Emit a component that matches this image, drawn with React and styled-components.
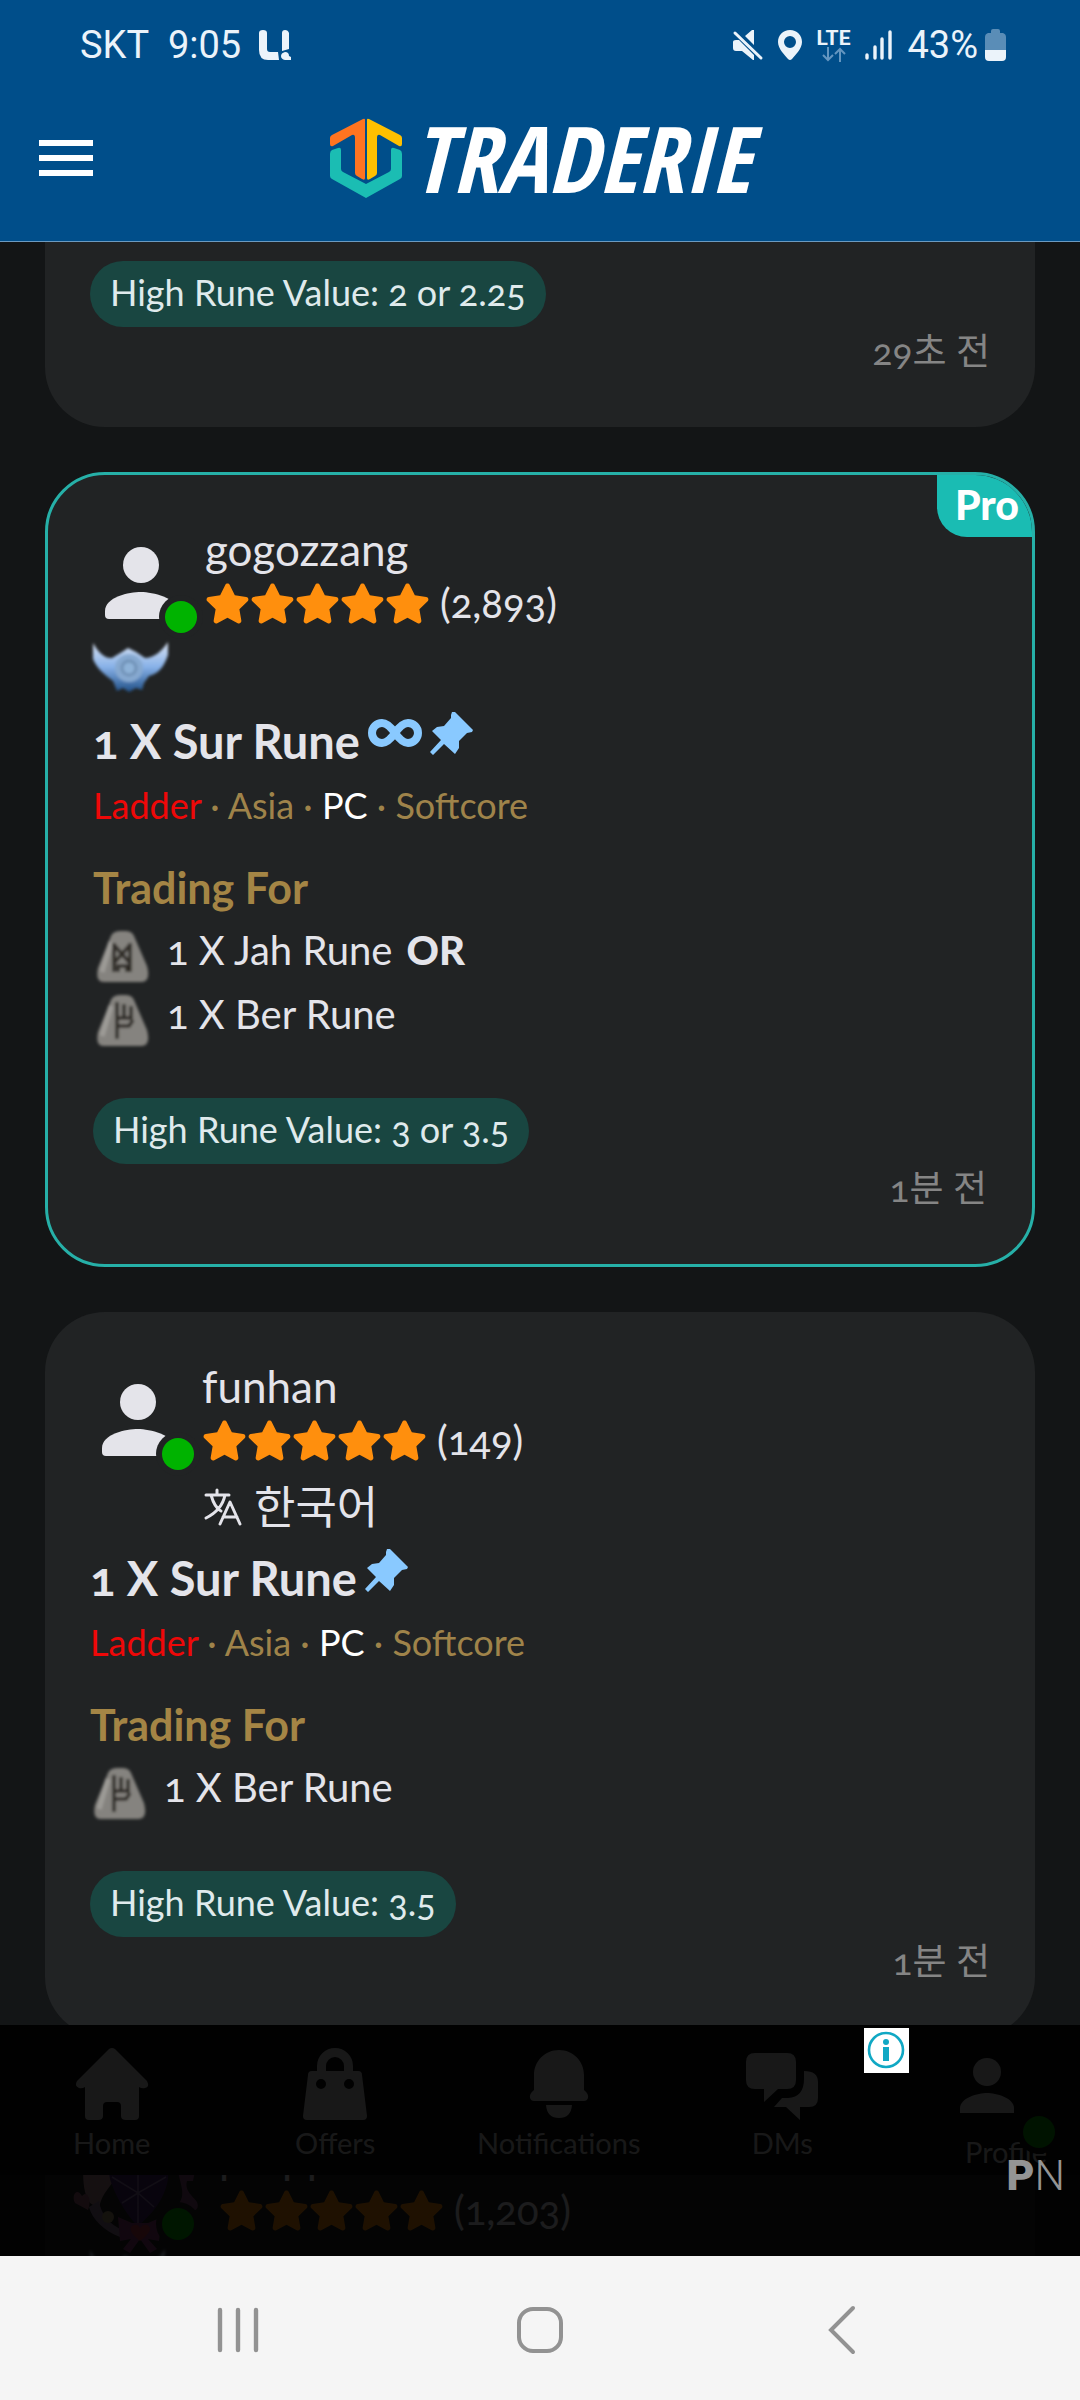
import styled, { createGlobalStyle, css } from "styled-components";
import { FaStar } from "react-icons/fa";

const GlobalStyle = createGlobalStyle`
    * {
        box-sizing: border-box;
    }

    body {
        margin: 0;
        background-color: #131516;
        color: #e4e4ea;
        font-family: "Lato", "Noto Sans CJK KR", sans-serif;
        font-size: 40px;
        font-variant-numeric: oldstyle-nums;
    }

    h2, h3, p, ul {
        margin: 0;
        padding: 0;
    }

    button {
        border: none;
        padding: 0;
        background: none;
        cursor: pointer;
    }

    svg {
        display: block;
        flex-shrink: 0;
        overflow: visible;
    }
`;

const Screen = styled.div`
    display: flex;
    flex-direction: column;
    height: 100vh;
    overflow: hidden;
`;

const TopArea = styled.header`
    background-color: #004e8a;
    border-bottom: 1px solid #6c9abf;
`;

const StatusBar = styled.div`
    display: flex;
    justify-content: space-between;
    padding: 15px 74px 0 80px;
    height: 75px;
    color: #ebf3fa;
    font-family: "Roboto", sans-serif;
    font-size: 38px;
    font-variant-numeric: lining-nums;
    line-height: 62px;
`;

const StatusGroup = styled.div`
    display: flex;
    align-items: center;
    gap: ${(props) => props.$gap}px;
`;

const Network = styled.div`
    display: flex;
    flex-direction: column;
    align-items: center;
    font-size: 21px;
    font-weight: 700;
    line-height: 18px;
`;

const Toolbar = styled.div`
    display: grid;
    grid-template-columns: 1fr auto 1fr;
    align-items: center;
    height: 166px;
    padding: 0 39px;
`;

const MenuButton = styled.button`
    display: flex;
    flex-direction: column;
    gap: 9px;
    width: 54px;

    span {
        height: 6px;
        background-color: #ffffff;
    }
`;

const Brand = styled.a`
    display: flex;
    align-items: center;
    gap: 10px;
    color: #ffffff;
    font-family: "Open Sans Condensed", "Roboto Condensed", "Liberation Sans Narrow", sans-serif;
    font-size: 92px;
    font-style: italic;
    font-weight: 700;
    line-height: 80px;
    text-decoration: none;
`;

const Feed = styled.main`
    position: relative;
    flex: 1;
    min-height: 0;
    overflow: hidden;
    display: flex;
    flex-direction: column;
    gap: 45px;
    padding: 0 45px;
`;

const Card = styled.article`
    position: relative;
    flex-shrink: 0;
    padding: 45px 45px 50px;
    background-color: #212324;
    border-radius: 60px;
    overflow: hidden;

    ${(props) =>
        props.$pro &&
        css`
            border: 3px solid #26b0a8;
        `}

    ${(props) =>
        props.$scrolled &&
        css`
            padding-top: 19px;
            border-top-left-radius: 0;
            border-top-right-radius: 0;
        `}
`;

const ProTag = styled.span`
    position: absolute;
    top: 0;
    right: 0;
    padding: 0 13px 3px 18px;
    background-color: #1abcb3;
    border-bottom-left-radius: 30px;
    color: #ffffff;
    font-size: 41px;
    font-weight: 900;
    line-height: 59px;
`;

const UserRow = styled.div`
    display: flex;
    gap: ${(props) => (props.$framed ? 20 : 4)}px;
    margin-left: ${(props) => (props.$framed ? -16 : 0)}px;
    height: 108px;
`;

const UserName = styled.a`
    display: block;
    color: inherit;
    font-size: 44px;
    line-height: 58px;
    text-decoration: none;
`;

const Rating = styled.div`
    display: flex;
    align-items: center;
    line-height: 50px;
`;

const Stars = styled.span`
    display: flex;
    color: #ff8f0d;
    margin-right: 10px;
`;

const ExtraRow = styled.div`
    display: flex;
    align-items: center;
    gap: 12px;
    height: 83px;
    padding-left: ${(props) => (props.$indent ? 114 : 0)}px;
    font-size: 45px;
    line-height: 60px;
`;

const Title = styled.h2`
    display: flex;
    gap: 8px;
    font-size: 47px;
    font-weight: 700;
    line-height: 60px;
`;

const InfinityBox = styled.span`
    padding-top: 8px;
`;

const Tags = styled.p`
    margin-top: 9px;
    color: #9f834a;
    font-size: 36px;
    line-height: 50px;
`;

const Ladder = styled.span`
    color: #ee0808;
`;

const Platform = styled.span`
    color: #ffffff;
`;

const TradingFor = styled.h3`
    margin-top: 32px;
    color: #a48545;
    font-size: 43px;
    line-height: 52px;
`;

const TradeList = styled.ul`
    margin: 4px 0 52px;
    list-style: none;
`;

const TradeItem = styled.li`
    display: flex;
    gap: 14px;
    line-height: 64px;

    b {
        font-weight: 900;
    }
`;

const Value = styled.span`
    display: table;
    padding: 0 20px 4px;
    background-color: #194641;
    border-radius: 34px;
    color: #dfeaec;
    font-size: 36px;
    line-height: 62px;
`;

const Time = styled.time`
    display: block;
    color: #858585;
    font-size: 37px;
    line-height: 48px;
    padding-bottom: 2px;
    text-align: right;
`;

const TabBar = styled.nav`
    position: absolute;
    right: 0;
    bottom: 81px;
    left: 0;
    display: flex;
    height: 150px;
    background-color: #0a0a0b;
`;

const Tab = styled.a`
    flex: 1;
    display: flex;
    flex-direction: column;
    align-items: center;
    padding-top: 23px;
    color: #c2c4c4;
    font-size: 29px;
    line-height: 46px;
    text-decoration: none;

    svg {
        position: relative;
        z-index: 1;
    }

    &:last-child {
        flex: 0 0 186px;
        padding-left: 38px;
    }
`;

const AdOverlay = styled.aside`
    position: absolute;
    right: 0;
    bottom: 0;
    left: 0;
    z-index: 2;
    height: 231px;
    background-color: rgba(0, 0, 0, 0.88);
`;

const AdInfo = styled.button`
    position: absolute;
    top: 3px;
    right: 171px;
    background-color: #ffffff;
`;

const AdLabel = styled.span`
    position: absolute;
    right: 15px;
    bottom: 57px;
    color: #949494;
    font-family: "Roboto", sans-serif;
    font-size: 43px;
    font-weight: 300;
    line-height: 48px;

    b {
        font-weight: 900;
    }
`;

const SystemNav = styled.nav`
    display: grid;
    grid-template-columns: repeat(3, 1fr);
    height: 144px;
    padding: 4px 87px 0;
    background-color: #f5f5f5;

    button {
        display: flex;
        align-items: center;
        justify-content: center;
    }
`;

const CarrierIcon = () => (
    <svg width="32" height="30" viewBox="0 0 32 30" fill="currentColor">
        <path d="M0 3Q0 0 4 0T8 3V19Q8 22 11 22H19L20 30H9Q0 30 0 20Z" />
        <path d="M23 3Q23 0 26 0T30 3V19L23 21Z" />
        <path d="M26 22Q30 22 30 26L32 27V30H26Q22 29 22 26T26 22Z" />
    </svg>
);

const MuteIcon = () => (
    <svg width="30" height="30" viewBox="0 0 30 30">
        <path d="M3 10H6L21 25V30H20L9 21H3Q0 21 0 18V12Q0 10 3 10ZM12 6L19 0H21V15Z" fill="currentColor" />
        <path d="M2 3L28 28" stroke="currentColor" strokeWidth="3" strokeLinecap="round" />
    </svg>
);

const PinIcon = () => (
    <svg width="24" height="30" viewBox="0 0 24 30" fill="currentColor">
        <path
            fillRule="evenodd"
            d="M12 0C5 0 0 5 0 12C0 19 7 25 10 29Q12 31 14 29C17 25 24 19 24 12C24 5 19 0 12 0ZM12 6A6 6 0 1 1 12 18A6 6 0 1 1 12 6Z"
        />
    </svg>
);

const DataArrows = () => (
    <svg width="24" height="15" viewBox="0 0 24 15" fill="none" stroke="#6496c0" strokeWidth="2">
        <path d="M6 0V13M1 8L6 13L11 8M18 15V2M13 7L18 2L23 7" />
    </svg>
);

const SignalIcon = () => (
    <svg width="27" height="30" viewBox="0 0 27 30" stroke="currentColor" strokeWidth="3.4" strokeLinecap="round">
        <path d="M2 25V28M10 17V28M17 9V28M25 2V28" />
    </svg>
);

const BatteryIcon = () => (
    <svg width="21" height="32" viewBox="0 0 21 32">
        <path d="M6 2Q6 0 8 0H13Q15 0 15 2V4H18Q21 5 21 8V21H0V8Q0 5 3 4H6Z" fill="#5a8db7" />
        <path d="M0 21H21V28Q21 32 17 32H4Q0 32 0 28Z" fill="#ebf3fa" />
    </svg>
);

const half = "M33 1Q35 0 35 2V60Q35 63 32 61L27 58Q25 57 25 55V20Q25 16 22 17L3 28Q0 29 0 26V20Q0 18 2 17Z";

const HexLogo = () => (
    <svg width="72" height="80" viewBox="0 0 72 80">
        <path d={half} fill="#ff7420" />
        <path d={half} fill="#ffc000" transform="matrix(-1 0 0 1 72 0)" />
        <path
            d="M0 36Q0 33 2 32L8 30Q11 29 11 32V51Q11 53 13 54L36 66L59 54Q61 53 61 51V32Q61 29 64 30L70 32Q72 33 72 36V58Q72 60 70 61L36 80L2 61Q0 60 0 58Z"
            fill="#1bbdb3"
        />
    </svg>
);

const Person = () => (
    <svg width="108" height="108" viewBox="0 0 108 108">
        <circle cx="48" cy="45" r="18" fill="#e4e4ea" />
        <path d="M48 72C36 72 12 77 12 91V95Q12 99 16 99H84V90C84 78 60 72 48 72Z" fill="#e4e4ea" />
        <circle cx="88" cy="97" r="22" fill="#212324" />
        <circle cx="88" cy="97" r="16" fill="#00b300" />
    </svg>
);

const FramedAvatar = () => (
    <svg width="125" height="126" viewBox="0 0 125 126">
        <path d="M9 40H46C42 58 28 62 25 82L16 76C10 68 9 56 9 40Z" fill="#a8808f" />
        <path d="M8 69C3 60-3 68 1 76L14 83C18 74 14 62 8 69Z" fill="#9a5875" />
        <path d="M15 80C18 92 30 104 46 110L48 103C36 97 27 88 25 74Z" fill="#8a7095" />
        <circle cx="34" cy="90" r="6" fill="#a0916a" />
        <path d="M34 40H94V52C90 76 74 90 64 99C52 88 40 66 36 52Z" fill="#46206e" />
        <path d="M64 40V98M38 50L64 66L92 50M48 76L64 66L80 80" stroke="#8f75ab" strokeWidth="1.5" fill="none" />
        <path d="M104 44H121L119 54H113C110 64 120 70 123 75Q126 82 119 84L105 76C112 68 106 56 104 44Z" fill="#874a78" />
        <path d="M44 90L58 96H74L88 90L85 114L74 112L83 122L76 126L66 112L56 126L49 122L57 112L46 114Z" fill="#8a3f78" />
        <path d="M66 114C56 106 54 100 60 98Q64 97 66 101Q69 97 73 98C79 101 76 106 66 114Z" fill="#b83a4c" />
        <circle cx="104" cy="97" r="22" fill="#212324" />
        <circle cx="104" cy="97" r="16" fill="#00b300" />
    </svg>
);

const Emblem = () => (
    <svg width="76" height="60" viewBox="0 0 76 60">
        <defs>
            <linearGradient id="wing" x1="0" y1="0" x2="0" y2="1">
                <stop offset="0" stopColor="#dbe4f3" />
                <stop offset="0.5" stopColor="#87b1e8" />
                <stop offset="1" stopColor="#1f4f86" />
            </linearGradient>
            <filter id="soft">
                <feGaussianBlur stdDeviation="1.4" />
            </filter>
        </defs>
        <g filter="url(#soft)">
            <path
                d="M0 3C5 12 12 19 19 18L29 12L35 8L43 12L52 18C61 18 69 11 75 2V15C71 27 65 34 56 36L51 43L49 50L43 48L36 52L30 48L24 51L20 41C12 35 4 29 0 19Z"
                fill="url(#wing)"
            />
            <circle cx="36" cy="28" r="14" fill="#86a9d0" />
            <circle cx="36" cy="28" r="7" fill="#8eb2d8" stroke="#7091b6" strokeWidth="3" />
        </g>
    </svg>
);

const InfinityIcon = () => (
    <svg width="54" height="28" viewBox="0 0 54 28">
        <path
            d="M27 14C22 7 18 4 14 4A10 10 0 0 0 14 24C18 24 22 21 27 14C32 7 36 4 40 4A10 10 0 0 1 40 24C36 24 32 21 27 14Z"
            fill="none"
            stroke="#89c9ff"
            strokeWidth="8"
        />
    </svg>
);

const Pushpin = () => (
    <svg width="43" height="44" viewBox="0 0 43 44">
        <path
            d="M22 1L25 1L43 19L42 21L37 22L29 30V37L25 43L14 33L3 44L0 41L11 29L2 20L7 16L14 15L21 7V4Z"
            fill="#89c9ff"
        />
    </svg>
);

const TranslateIcon = () => (
    <svg
        width="38"
        height="38"
        viewBox="0 0 38 38"
        fill="none"
        stroke="#e4e4ea"
        strokeWidth="3"
        strokeLinecap="round"
        strokeLinejoin="round"
    >
        <path d="M2 7H25M13 2V7M7 7C9 14 13 21 17 23M21 7C19 17 12 25 2 30M16 36L26 14L36 36M19 29H33" />
    </svg>
);

const runeMarks = {
    Jah: "M21 25V54M37 25V54M21 27L37 45M37 27L21 45M25 54V48H34V54",
    Ber: "M24 20V57M24 36H40M31 22V36M38 24V36M24 44H36L40 38",
};

const RuneIcon = ({ rune }) => (
    <svg width="60" height="64" viewBox="0 0 60 64">
        <g filter="url(#soft)">
            <path d="M18 18Q20 13 28 13H32Q39 13 41 18L54 48Q58 63 49 64H11Q2 64 5 50Z" fill="#85837f" />
            <path d="M18 24L9 54" stroke="#9d9b97" strokeWidth="5" />
            <path d={runeMarks[rune]} fill="none" stroke="#2f2c27" strokeWidth="3.6" />
        </g>
    </svg>
);

const tabs = [
    {
        label: "Home",
        width: 72,
        height: 72,
        icon: (
            <path d="M33 1Q36-1 39 1L71 33Q74 39 69 40Q66 41 63 39V68Q63 72 59 72H50Q45 72 45 68V58Q45 54 41 54H31Q27 54 27 58V68Q27 72 22 72H13Q9 72 9 68V39Q6 41 3 40Q-2 38 1 33Z" />
        ),
    },
    {
        label: "Offers",
        width: 64,
        height: 72,
        icon: (
            <path
                fillRule="evenodd"
                d="M14 23V18A18 18 0 0 1 50 18V23H55Q59 23 59 27L64 68Q64 72 60 72H4Q0 72 0 68L5 27Q5 23 9 23ZM23 23H41V18A9 9 0 0 0 23 18ZM18 31A5 5 0 1 0 18 41A5 5 0 1 0 18 31ZM46 31A5 5 0 1 0 46 41A5 5 0 1 0 46 31Z"
            />
        ),
    },
    {
        label: "Notifications",
        width: 60,
        height: 72,
        icon: (
            <path d="M30 2C16 2 5 13 5 27V42Q0 46 1 50Q2 53 5 53H55Q58 53 59 50Q60 46 55 42V27C55 13 44 2 30 2ZM17 57H43Q42 70 30 70T17 57Z" />
        ),
    },
    {
        label: "DMs",
        width: 72,
        height: 72,
        icon: (
            <path d="M9 5H41Q50 5 50 14V32Q50 41 41 41H32L18 54V41H9Q0 41 0 32V14Q0 5 9 5ZM58 23Q72 23 72 34V50Q72 59 63 59H54V72L40 59H28L36 50H42Q58 49 58 31Z" />
        ),
    },
    {
        label: "Profile",
        width: 108,
        height: 81,
        icon: (
            <>
                <circle cx="35" cy="24" r="14" />
                <path d="M35 45C26 45 8 50 8 60V65H62V60C62 50 44 45 35 45Z" />
                <circle cx="87" cy="84" r="22" fill="#0a0a0b" />
                <circle cx="87" cy="84" r="16" fill="#009800" />
            </>
        ),
    },
];

const listings = [
    { id: 1, scrolled: true, value: "2 or 2.25", time: "29초 전" },
    {
        id: 2,
        pro: true,
        user: "gogozzang",
        reviews: "2,893",
        emblem: true,
        infinite: true,
        runes: ["Jah", "Ber"],
        value: "3 or 3.5",
        time: "1분 전",
    },
    { id: 3, user: "funhan", reviews: "149", language: "한국어", runes: ["Ber"], value: "3.5", time: "1분 전" },
    { id: 4, user: "prepp", reviews: "1,203", framed: true, emblem: true },
];

function Seller({ item }) {
    return (
        <>
            <UserRow $framed={item.framed}>
                {item.framed ? <FramedAvatar /> : <Person />}
                <div>
                    <UserName href="#profile">{item.user}</UserName>
                    <Rating>
                        <Stars>
                            {[1, 2, 3, 4, 5].map((n) => (
                                <FaStar key={n} size={45} />
                            ))}
                        </Stars>
                        ({item.reviews})
                    </Rating>
                </div>
            </UserRow>
            <ExtraRow $indent={item.language}>
                {item.emblem && <Emblem />}
                {item.language && (
                    <>
                        <TranslateIcon />
                        {item.language}
                    </>
                )}
            </ExtraRow>
        </>
    );
}

function Offer({ item }) {
    return (
        <>
            <Title>
                1 X Sur Rune
                {item.infinite && (
                    <InfinityBox>
                        <InfinityIcon />
                    </InfinityBox>
                )}
                <Pushpin />
            </Title>
            <Tags>
                <Ladder>Ladder</Ladder> · Asia · <Platform>PC</Platform> · Softcore
            </Tags>
            <TradingFor>Trading For</TradingFor>
            <TradeList>
                {item.runes.map((rune, i) => (
                    <TradeItem key={rune}>
                        <RuneIcon rune={rune} />
                        <span>1 X {rune} Rune</span>
                        {i < item.runes.length - 1 && <b>OR</b>}
                    </TradeItem>
                ))}
            </TradeList>
        </>
    );
}

function App() {
    return (
        <Screen>
            <GlobalStyle />
            <TopArea>
                <StatusBar>
                    <StatusGroup $gap={18}>
                        <span>SKT&nbsp; 9:05</span>
                        <CarrierIcon />
                    </StatusGroup>
                    <StatusGroup $gap={15}>
                        <MuteIcon />
                        <PinIcon />
                        <Network>
                            LTE
                            <DataArrows />
                        </Network>
                        <SignalIcon />
                        <StatusGroup $gap={7}>
                            43%
                            <BatteryIcon />
                        </StatusGroup>
                    </StatusGroup>
                </StatusBar>
                <Toolbar>
                    <MenuButton aria-label="Menu">
                        <span />
                        <span />
                        <span />
                    </MenuButton>
                    <Brand href="#home">
                        <HexLogo />
                        TRADERIE
                    </Brand>
                </Toolbar>
            </TopArea>
            <Feed>
                {listings.map((item) => (
                    <Card key={item.id} $pro={item.pro} $scrolled={item.scrolled}>
                        {item.pro && <ProTag>Pro</ProTag>}
                        {item.user && <Seller item={item} />}
                        {item.runes && <Offer item={item} />}
                        {item.value && <Value>High Rune Value: {item.value}</Value>}
                        {item.time && <Time>{item.time}</Time>}
                    </Card>
                ))}
                <TabBar>
                    {tabs.map((tab) => (
                        <Tab key={tab.label} href={`#${tab.label.toLowerCase()}`}>
                            <svg
                                width={tab.width}
                                height={tab.height}
                                viewBox={`0 0 ${tab.width} ${tab.height}`}
                                fill="currentColor"
                            >
                                {tab.icon}
                            </svg>
                            {tab.label}
                        </Tab>
                    ))}
                </TabBar>
                <AdOverlay>
                    <AdInfo aria-label="Ad info">
                        <svg width="45" height="45" viewBox="0 0 45 45">
                            <circle cx="22" cy="22" r="17" fill="none" stroke="#10a8c4" strokeWidth="2.6" />
                            <circle cx="22" cy="14" r="3" fill="#10a8c4" />
                            <rect x="19" y="19" width="6" height="14" fill="#10a8c4" />
                        </svg>
                    </AdInfo>
                    <AdLabel>
                        <b>P</b>N
                    </AdLabel>
                </AdOverlay>
            </Feed>
            <SystemNav>
                <button aria-label="Recent apps">
                    <svg width="42" height="46" viewBox="0 0 42 46" stroke="#929292" strokeWidth="4.4" strokeLinecap="round">
                        <path d="M3 3V43M21 3V43M39 3V43" />
                    </svg>
                </button>
                <button aria-label="Home">
                    <svg width="46" height="46" viewBox="0 0 46 46">
                        <rect x="2" y="2" width="42" height="42" rx="14" fill="none" stroke="#929292" strokeWidth="4" />
                    </svg>
                </button>
                <button aria-label="Back">
                    <svg width="28" height="48" viewBox="0 0 28 48" fill="none" stroke="#929292" strokeWidth="4" strokeLinecap="round">
                        <path d="M25 2L3 24L25 46" />
                    </svg>
                </button>
            </SystemNav>
        </Screen>
    );
}

export default App;
